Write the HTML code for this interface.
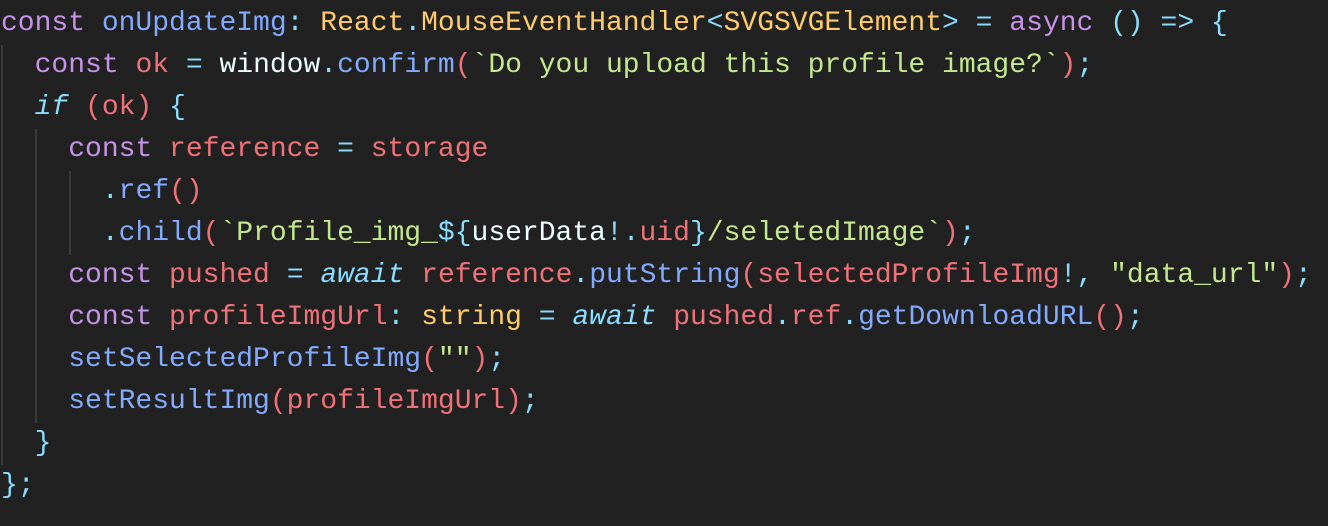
<!DOCTYPE html>
<html><head><style>
html,body{margin:0;padding:0;background:#212121;width:1328px;height:526px;overflow:hidden}
pre{margin:0;padding:3px 0 0 1px;font-family:"Liberation Mono","DejaVu Sans Mono",monospace;font-size:28px;line-height:42px;color:#eeffff;position:relative}
.k{color:#c792ea}.f{color:#82aaff}.t{color:#ffcb6b}.v{color:#f07178}.o{color:#89ddff}.s{color:#c3e88d}.i{color:#89ddff;font-style:italic}
.g{position:absolute;width:2px;background:#3a3a3a}
</style></head><body>
<div class="g" style="left:1px;top:45px;height:420px"></div>
<div class="g" style="left:35px;top:129px;height:294px"></div>
<div class="g" style="left:69px;top:171px;height:84px"></div>
<pre><span class="k">const</span> <span class="f">onUpdateImg</span><span class="o">:</span> <span class="t">React</span><span class="o">.</span><span class="t">MouseEventHandler</span><span class="o">&lt;</span><span class="t">SVGSVGElement</span><span class="o">&gt;</span> <span class="o">=</span> <span class="k">async</span> <span class="o">()</span> <span class="o">=&gt;</span> <span class="o">{</span>
  <span class="k">const</span> <span class="v">ok</span> <span class="o">=</span> window<span class="o">.</span><span class="f">confirm</span><span class="v">(</span><span class="s">`Do you upload this profile image?`</span><span class="v">)</span><span class="o">;</span>
  <span class="i">if</span> <span class="v">(ok)</span> <span class="o">{</span>
    <span class="k">const</span> <span class="v">reference</span> <span class="o">=</span> <span class="v">storage</span>
      <span class="o">.</span><span class="f">ref</span><span class="v">()</span>
      <span class="o">.</span><span class="f">child</span><span class="v">(</span><span class="s">`Profile_img_</span><span class="o">${</span>userData<span class="o">!.</span><span class="v">uid</span><span class="o">}</span><span class="s">/seletedImage`</span><span class="v">)</span><span class="o">;</span>
    <span class="k">const</span> <span class="v">pushed</span> <span class="o">=</span> <span class="i">await</span> <span class="v">reference</span><span class="o">.</span><span class="f">putString</span><span class="v">(selectedProfileImg</span><span class="o">!,</span> <span class="s">"data_url"</span><span class="v">)</span><span class="o">;</span>
    <span class="k">const</span> <span class="v">profileImgUrl</span><span class="o">:</span> <span class="t">string</span> <span class="o">=</span> <span class="i">await</span> <span class="v">pushed</span><span class="o">.</span><span class="v">ref</span><span class="o">.</span><span class="f">getDownloadURL</span><span class="v">()</span><span class="o">;</span>
    <span class="f">setSelectedProfileImg</span><span class="v">(</span><span class="s">""</span><span class="v">)</span><span class="o">;</span>
    <span class="f">setResultImg</span><span class="v">(profileImgUrl)</span><span class="o">;</span>
  <span class="o">}</span>
<span class="o">};</span></pre>
</body></html>
